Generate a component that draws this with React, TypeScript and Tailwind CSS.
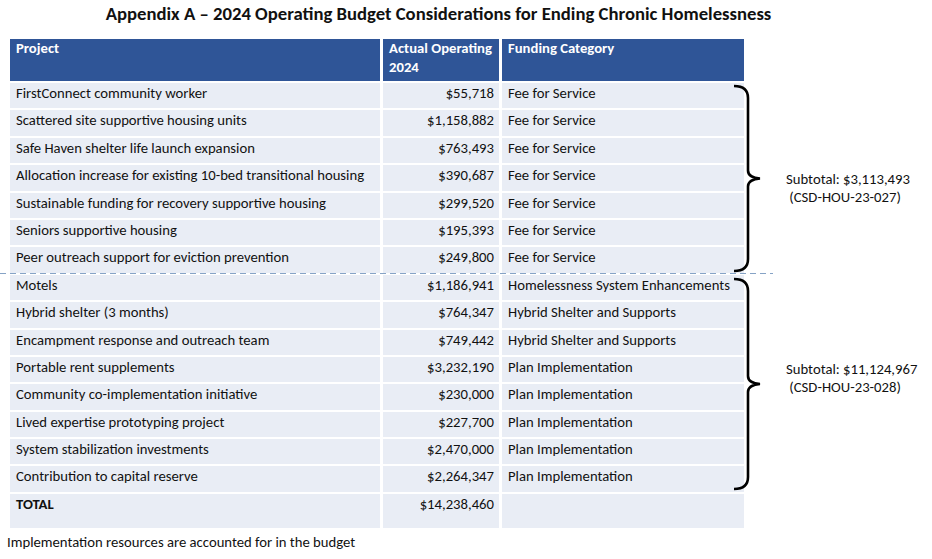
const feeRows = [
  ['FirstConnect community worker', '$55,718', 'Fee for Service'],
  ['Scattered site supportive housing units', '$1,158,882', 'Fee for Service'],
  ['Safe Haven shelter life launch expansion', '$763,493', 'Fee for Service'],
  ['Allocation increase for existing 10-bed transitional housing', '$390,687', 'Fee for Service'],
  ['Sustainable funding for recovery supportive housing', '$299,520', 'Fee for Service'],
  ['Seniors supportive housing', '$195,393', 'Fee for Service'],
  ['Peer outreach support for eviction prevention', '$249,800', 'Fee for Service'],
];

const planRows = [
  ['Motels', '$1,186,941', 'Homelessness System Enhancements'],
  ['Hybrid shelter (3 months)', '$764,347', 'Hybrid Shelter and Supports'],
  ['Encampment response and outreach team', '$749,442', 'Hybrid Shelter and Supports'],
  ['Portable rent supplements', '$3,232,190', 'Plan Implementation'],
  ['Community co-implementation initiative', '$230,000', 'Plan Implementation'],
  ['Lived expertise prototyping project', '$227,700', 'Plan Implementation'],
  ['System stabilization investments', '$2,470,000', 'Plan Implementation'],
  ['Contribution to capital reserve', '$2,264,347', 'Plan Implementation'],
];

const cols = 'grid grid-cols-[370px_116px_242px] gap-x-[3px] gap-y-[2px]';

function Rows({ rows }: { rows: string[][] }) {
  return (
    <div className={cols}>
      {rows.map((r) => (
        <div key={r[0]} className="contents">
          <div className="h-[25.4px] bg-[#E9EDF5] pl-[6px] leading-[21px] whitespace-nowrap">{r[0]}</div>
          <div className="h-[25.4px] bg-[#E9EDF5] pr-[5px] text-right leading-[21px]">{r[1]}</div>
          <div className="h-[25.4px] bg-[#E9EDF5] pl-[6px] leading-[21px] whitespace-nowrap">{r[2]}</div>
        </div>
      ))}
    </div>
  );
}

function Brace({ h }: { h: number }) {
  const m = h / 2;
  return (
    <svg width="30" height={h} className="-ml-[11px] shrink-0">
      <path
        d={`M1 2 Q15 2 15 14 L15 ${m - 8} Q15 ${m - 1} 27 ${m} Q15 ${m + 1} 15 ${m + 8} L15 ${h - 14} Q15 ${h - 2} 1 ${h - 2}`}
        fill="none"
        stroke="#000"
        strokeWidth="2.6"
      />
    </svg>
  );
}

export default function App() {
  return (
    <div className="w-[932px] h-[559px] bg-white text-[#111] font-['Carlito','Lato',sans-serif] text-[14.7px]">
      <h1 className="h-[39px] pt-[2px] pr-[55px] text-center text-[18.7px] font-bold leading-[24px] whitespace-nowrap">
        Appendix A – 2024 Operating Budget Considerations for Ending Chronic Homelessness
      </h1>
      <div className="flex">
        <div className="pl-[10px] w-[744px] shrink-0">
          <div className={`${cols} mb-[2px]`}>
            <div className="h-[42px] bg-[#2F5597] text-white font-bold pl-[6px] leading-[19px]">Project</div>
            <div className="h-[42px] bg-[#2F5597] text-white font-bold pl-[6px] leading-[19px] whitespace-nowrap">
              Actual Operating
              <br />
              2024
            </div>
            <div className="h-[42px] bg-[#2F5597] text-white font-bold pl-[6px] leading-[19px]">Funding Category</div>
          </div>
          <Rows rows={feeRows} />
          <div className="h-[2px] -ml-[10px] w-[773px] flex items-center">
            <div className="h-[1px] w-full bg-[repeating-linear-gradient(90deg,#86A3C6_0_6px,transparent_6px_10px)]" />
          </div>
          <Rows rows={planRows} />
          <div className={`${cols} mt-[2px]`}>
            <div className="h-[34px] bg-[#E9EDF5] pl-[6px] font-bold leading-[21px]">TOTAL</div>
            <div className="h-[34px] bg-[#E9EDF5] pr-[5px] text-right leading-[21px]">$14,238,460</div>
            <div className="h-[34px] bg-[#E9EDF5]" />
          </div>
        </div>
        <div className="flex flex-col">
          <div className="h-[44px]" />
          <div className="flex h-[189px] mt-[1px]">
            <Brace h={189} />
            <div className="flex flex-col justify-center pt-[18px] pl-[23px] leading-[18px] whitespace-pre">
              <div>Subtotal: $3,113,493</div>
              <div> (CSD-HOU-23-027)</div>
            </div>
          </div>
          <div className="h-[4px]" />
          <div className="flex h-[214px]">
            <Brace h={214} />
            <div className="flex flex-col justify-center pb-[12px] pl-[23px] leading-[18px] whitespace-pre">
              <div>Subtotal: $11,124,967</div>
              <div> (CSD-HOU-23-028)</div>
            </div>
          </div>
        </div>
      </div>
      <p className="pl-[7px] pt-[4px] leading-[20px]">Implementation resources are accounted for in the budget</p>
    </div>
  );
}
